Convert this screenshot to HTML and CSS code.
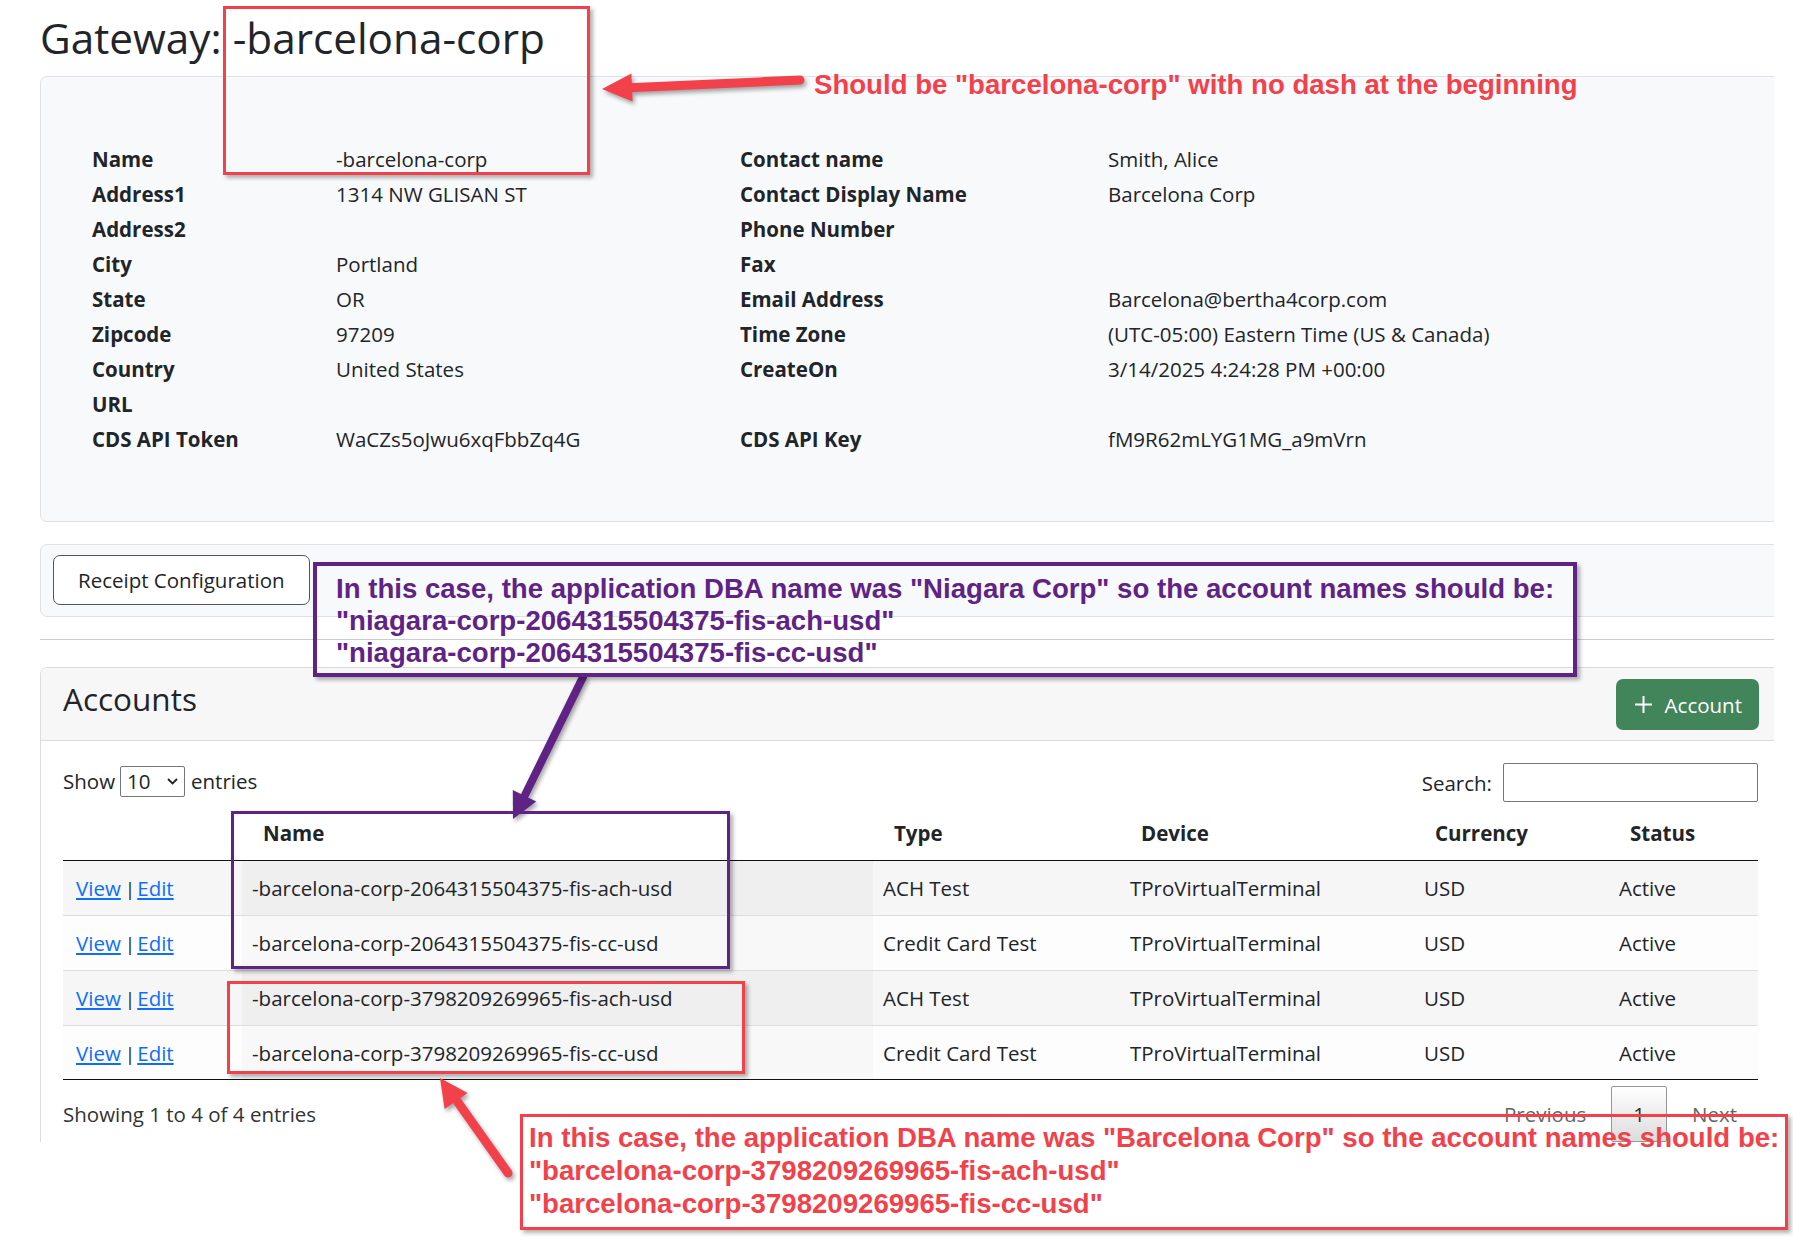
FILE: index.html
```html
<!DOCTYPE html>
<html lang="en">
<head>
<meta charset="utf-8">
<title>Gateway: -barcelona-corp</title>
<link rel="stylesheet" href="styles.css">
</head>
<body>
<div class="canvas">
  <div class="shot">
    <div class="page">
      <h1 class="title">Gateway: -barcelona-corp</h1>

      <section class="card details">
        <dl class="kv">
          <dt>Name</dt><dd>-barcelona-corp</dd><dt>Contact name</dt><dd>Smith, Alice</dd>
          <dt>Address1</dt><dd>1314 NW GLISAN ST</dd><dt>Contact Display Name</dt><dd>Barcelona Corp</dd>
          <dt>Address2</dt><dd></dd><dt>Phone Number</dt><dd></dd>
          <dt>City</dt><dd>Portland</dd><dt>Fax</dt><dd></dd>
          <dt>State</dt><dd>OR</dd><dt>Email Address</dt><dd>Barcelona@bertha4corp.com</dd>
          <dt>Zipcode</dt><dd>97209</dd><dt>Time Zone</dt><dd>(UTC-05:00) Eastern Time (US &amp; Canada)</dd>
          <dt>Country</dt><dd>United States</dd><dt>CreateOn</dt><dd>3/14/2025 4:24:28 PM +00:00</dd>
          <dt>URL</dt><dd></dd><dt></dt><dd></dd>
          <dt>CDS API Token</dt><dd>WaCZs5oJwu6xqFbbZq4G</dd><dt>CDS API Key</dt><dd>fM9R62mLYG1MG_a9mVrn</dd>
        </dl>
      </section>

      <section class="card receipt">
        <button class="btn-outline" type="button">Receipt Configuration</button>
      </section>

      <hr class="sep">

      <section class="card accounts">
        <div class="card-header">
          <h2 class="card-title">Accounts</h2>
          <button class="btn-green" type="button">
            <svg class="plus" width="17" height="17" viewBox="0 0 17 17"><path d="M8.5 0v17M0 8.5h17" stroke="#fff" stroke-width="2"/></svg>
            <span>Account</span>
          </button>
        </div>
        <div class="card-body">
          <div class="dt-top">
            <label class="len">Show
              <span class="select">10
                <svg width="11" height="7" viewBox="0 0 11 7"><path d="M1 1l4.5 4.5L10 1" fill="none" stroke="#222" stroke-width="1.8"/></svg>
              </span>
              entries</label>
            <label class="search">Search: <input type="text"></label>
          </div>

          <table class="dt">
            <colgroup>
              <col class="c1"><col class="c2"><col class="c3"><col class="c4"><col class="c5"><col>
            </colgroup>
            <thead>
              <tr><th></th><th>Name</th><th>Type</th><th>Device</th><th>Currency</th><th>Status</th></tr>
            </thead>
            <tbody>
              <tr class="odd"><td class="act"><a href="#">View</a><span class="bar">|</span><a href="#">Edit</a></td><td class="sorted">-barcelona-corp-2064315504375-fis-ach-usd</td><td>ACH Test</td><td>TProVirtualTerminal</td><td>USD</td><td>Active</td></tr>
              <tr class="even"><td class="act"><a href="#">View</a><span class="bar">|</span><a href="#">Edit</a></td><td class="sorted">-barcelona-corp-2064315504375-fis-cc-usd</td><td>Credit Card Test</td><td>TProVirtualTerminal</td><td>USD</td><td>Active</td></tr>
              <tr class="odd"><td class="act"><a href="#">View</a><span class="bar">|</span><a href="#">Edit</a></td><td class="sorted">-barcelona-corp-3798209269965-fis-ach-usd</td><td>ACH Test</td><td>TProVirtualTerminal</td><td>USD</td><td>Active</td></tr>
              <tr class="even"><td class="act"><a href="#">View</a><span class="bar">|</span><a href="#">Edit</a></td><td class="sorted">-barcelona-corp-3798209269965-fis-cc-usd</td><td>Credit Card Test</td><td>TProVirtualTerminal</td><td>USD</td><td>Active</td></tr>
            </tbody>
          </table>

          <div class="dt-bottom">
            <div class="info">Showing 1 to 4 of 4 entries</div>
            <div class="paginate">
              <span class="pbtn disabled">Previous</span>
              <span class="pbtn current">1</span>
              <span class="pbtn disabled">Next</span>
            </div>
          </div>
        </div>
      </section>
    </div>
  </div>

  <div class="annot">
    <svg class="arrows" width="1793" height="1259" viewBox="0 0 1793 1259">
      <g class="arrow red">
        <line x1="800" y1="80" x2="630" y2="87.7" stroke-width="9" stroke-linecap="round"/>
        <polygon points="602,89 631.4,73.6 632.6,101.6"/>
      </g>
      <g class="arrow purple">
        <line x1="583" y1="677" x2="525" y2="795" stroke-width="8" stroke-linecap="round"/>
        <polygon points="513,819 512.8,790 536.2,801.4"/>
      </g>
      <g class="arrow red">
        <line x1="508" y1="1173" x2="457" y2="1101" stroke-width="9" stroke-linecap="round"/>
        <polygon points="440,1078 467.6,1092.9 444.6,1108.9"/>
      </g>
    </svg>

    <div class="box red-box b1"></div>
    <div class="note red-text n1">Should be "barcelona-corp" with no dash at the beginning</div>

    <div class="box purple-box b2">
      <p class="note-lines purple-text">In this case, the application DBA name was "Niagara Corp" so the account names should be:<br>"niagara-corp-2064315504375-fis-ach-usd"<br>"niagara-corp-2064315504375-fis-cc-usd"</p>
    </div>
    <div class="box purple-box b3"></div>
    <div class="box red-box b4"></div>
    <div class="box red-box b5">
      <p class="note-lines red-text">In this case, the application DBA name was "Barcelona Corp" so the account names should be:<br>"barcelona-corp-3798209269965-fis-ach-usd"<br>"barcelona-corp-3798209269965-fis-cc-usd"</p>
    </div>
  </div>
</div>
</body>
</html>
```

FILE: styles.css
```css
* { box-sizing: border-box; }

body {
  margin: 0;
  font-family: "Open Sans", "Noto Sans", sans-serif;
  color: #212529;
  background: #fff;
}

.canvas {
  position: relative;
  width: 1793px;
  height: 1259px;
  overflow: hidden;
  background: #fff;
}

.shot {
  width: 1774px;
  height: 1142px;
  overflow: hidden;
}

.page {
  width: 1740px;
  margin-left: 40px;
}

.title {
  margin: 14px 0 14px;
  font-size: 42.3px;
  font-weight: 500;
  line-height: 48px;
}

.card {
  border: 1px solid #dee2e6;
  border-radius: 7px;
  background: #f8f9fa;
}

.details {
  height: 446px;
  padding: 65px 0 0 51px;
}

.kv {
  display: grid;
  grid-template-columns: 244px 404px 368px 1fr;
  grid-auto-rows: 35px;
  margin: 0;
  font-size: 20.5px;
  line-height: 35px;
}

.kv dt { font-weight: 700; }
.kv dd { margin: 0; }

.receipt {
  margin-top: 22px;
  padding: 10px 12px 11px;
}

.btn-outline {
  height: 50px;
  padding: 0 24px;
  border: 1px solid #4f565c;
  border-radius: 7px;
  background: #fff;
  font-family: inherit;
  font-size: 20.5px;
  color: #212529;
}

.sep {
  margin: 22px 0 0;
  border: 0;
  border-top: 1px solid #cbcccd;
  height: 0;
}

.accounts {
  margin-top: 27px;
  background: #fff;
  border-color: #dcdcdc;
  height: 600px;
}

.card-header {
  height: 73px;
  display: flex;
  align-items: center;
  justify-content: space-between;
  padding: 0 20px 0 22px;
  background: #f7f7f7;
  border-bottom: 1px solid #dcdcdc;
  border-radius: 7px 7px 0 0;
}

.card-title {
  margin: -10px 0 0;
  font-size: 31.5px;
  font-weight: 500;
  line-height: 38px;
}

.btn-green {
  display: flex;
  align-items: center;
  gap: 13px;
  height: 51px;
  margin-top: 1px;
  padding: 0 17px 0 19px;
  border: 0;
  border-radius: 7px;
  background: #43855a;
  color: #fff;
  font-family: inherit;
  font-size: 20.5px;
}

.card-body {
  padding: 22px 21px 0 22px;
}

.dt-top {
  height: 39px;
  display: flex;
  align-items: center;
  justify-content: space-between;
  font-size: 20.5px;
}

.len {
  display: flex;
  align-items: center;
  gap: 5px;
  margin-top: -3px;
}

.select {
  display: flex;
  align-items: center;
  justify-content: space-between;
  width: 65px;
  height: 31px;
  padding: 0 6px 0 6px;
  border: 1px solid #767676;
  border-radius: 2px;
  background: #fff;
  margin-right: 1px;
}

.search {
  display: flex;
  align-items: center;
  gap: 11px;
}

.search input {
  width: 255px;
  height: 39px;
  border: 1px solid #767676;
  border-radius: 2px;
  background: #fff;
}

.dt {
  width: 100%;
  margin-top: 3px;
  border-collapse: separate;
  border-spacing: 0;
  table-layout: fixed;
  font-size: 20.5px;
}

.dt .c1 { width: 179px; }
.dt .c2 { width: 631px; }
.dt .c3 { width: 247px; }
.dt .c4 { width: 294px; }
.dt .c5 { width: 195px; }

.dt th {
  height: 56px;
  padding: 0 0 0 21px;
  text-align: left;
  font-weight: 700;
  border-bottom: 1px solid #111;
  white-space: nowrap;
}

.dt td {
  padding: 0 0 0 10px;
  border-top: 1px solid #dddddd;
  white-space: nowrap;
}

.dt tbody tr { height: 55px; }
.dt tbody tr:first-child { height: 54px; }
.dt tbody tr:first-child td { border-top: 0; }
.dt tbody tr:last-child td { border-bottom: 1px solid #111; }

.dt tr.odd td { background: #f6f6f6; }
.dt tr.odd td.sorted { background: #efefef; }
.dt tr.even td { background: #fdfdfd; }
.dt tr.even td.sorted { background: #f8f8f8; }

.dt td.act { padding-left: 13px; }

.dt .bar {
  margin: 0 2px 0 4px;
  font-size: 19px;
}

.dt a {
  color: #0d6efd;
  text-decoration: underline;
}

.dt-bottom {
  display: flex;
  justify-content: space-between;
  align-items: flex-start;
  margin-top: 6px;
  font-size: 20.5px;
}

.info {
  line-height: 56px;
  color: #333;
}

.paginate {
  display: flex;
  margin-right: -1px;
}

.pbtn {
  height: 56px;
  line-height: 54px;
  padding: 0 21px;
  margin-left: 3px;
  border: 1px solid transparent;
  border-radius: 2px;
}

.pbtn.disabled { color: #666; }

.pbtn.current {
  color: #333;
  border-color: #979797;
  background: linear-gradient(to bottom, #fff 0%, #dcdcdc 100%);
}

/* annotations */
.annot {
  position: absolute;
  left: 0;
  top: 0;
  width: 1793px;
  height: 1259px;
  pointer-events: none;
}

.arrows {
  position: absolute;
  left: 0;
  top: 0;
}

.arrow { filter: drop-shadow(2px 3px 2px rgba(0, 0, 0, 0.35)); }
.arrow.red line { stroke: #f2414b; }
.arrow.red polygon { fill: #f2414b; }
.arrow.purple line { stroke: #5f2386; }
.arrow.purple polygon { fill: #5f2386; }

.box {
  position: absolute;
  border: 3px solid;
  box-shadow: 3px 3px 4px rgba(0, 0, 0, 0.3);
}

.red-box { border-color: #f2414b; }
.purple-box { border-color: #5f2386; }

.b1 { left: 223px; top: 6px; width: 367px; height: 169px; }
.b2 { left: 313px; top: 562px; width: 1264px; height: 115px; border-width: 4px; padding: 7px 0 0 19px; }
.b3 { left: 231px; top: 811px; width: 499px; height: 158px; }
.b4 { left: 227px; top: 981px; width: 518px; height: 93px; }
.b5 { left: 520px; top: 1114px; width: 1268px; height: 116px; padding: 4px 0 0 6px; }

.note,
.note-lines {
  font-family: "Liberation Sans", Arial, sans-serif;
  font-weight: 700;
  font-size: 27.6px;
  white-space: nowrap;
}

.note {
  position: absolute;
  left: 814px;
  top: 69px;
  line-height: 32px;
}

.note-lines {
  margin: 0;
  line-height: 32px;
}

.b5 .note-lines { line-height: 33px; }

.red-text { color: #f2414b; }
.purple-text { color: #5f2386; }
```
